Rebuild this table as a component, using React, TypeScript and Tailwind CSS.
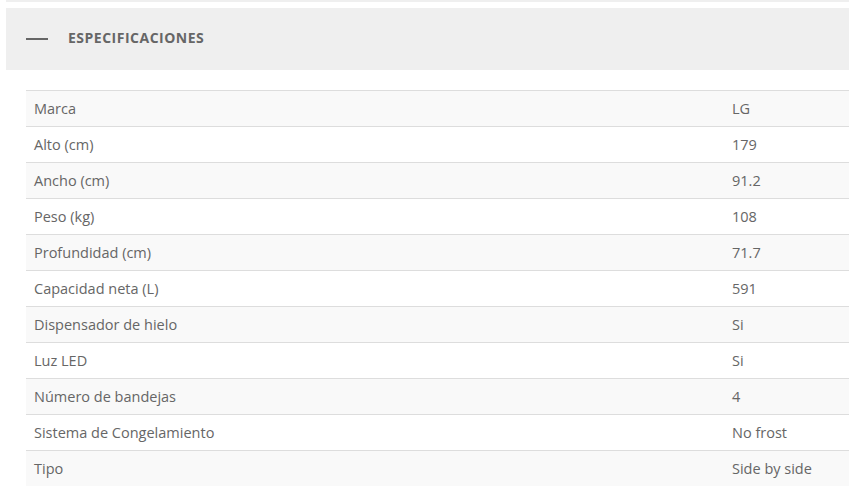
import React from "react";

const rows: [string, string][] = [
  ["Marca", "LG"],
  ["Alto (cm)", "179"],
  ["Ancho (cm)", "91.2"],
  ["Peso (kg)", "108"],
  ["Profundidad (cm)", "71.7"],
  ["Capacidad neta (L)", "591"],
  ["Dispensador de hielo", "Si"],
  ["Luz LED", "Si"],
  ["Número de bandejas", "4"],
  ["Sistema de Congelamiento", "No frost"],
  ["Tipo", "Side by side"],
];

export default function App() {
  return (
    <div
      className="w-[849px] h-[486px] overflow-hidden bg-white"
      style={{ fontFamily: '"Open Sans", "Liberation Sans", sans-serif' }}
    >
      <div className="ml-[6px] h-[2px] bg-[#efefef]" />
      <div className="ml-[6px] mt-[6px] h-[62px] bg-[#efefef] flex items-center">
        <div className="ml-[20px] w-[22px] h-[2px] bg-[#666]" />
        <div className="ml-[20px] pb-[4px] text-[14px] font-bold text-[#666] tracking-[0.5px]">
          ESPECIFICACIONES
        </div>
      </div>
      <div className="ml-[26px] mt-[20px] border-t border-[#ddd]">
        {rows.map(([k, v], i) => (
          <div
            key={k}
            className={`flex h-[36px] items-center border-b border-[#ddd] text-[14.5px] text-[#666] ${
              i % 2 === 0 ? "bg-[#f9f9f9]" : "bg-white"
            }`}
          >
            <div className="w-[698px] pl-[8px]">{k}</div>
            <div className="pl-[8px]">{v}</div>
          </div>
        ))}
      </div>
    </div>
  );
}
